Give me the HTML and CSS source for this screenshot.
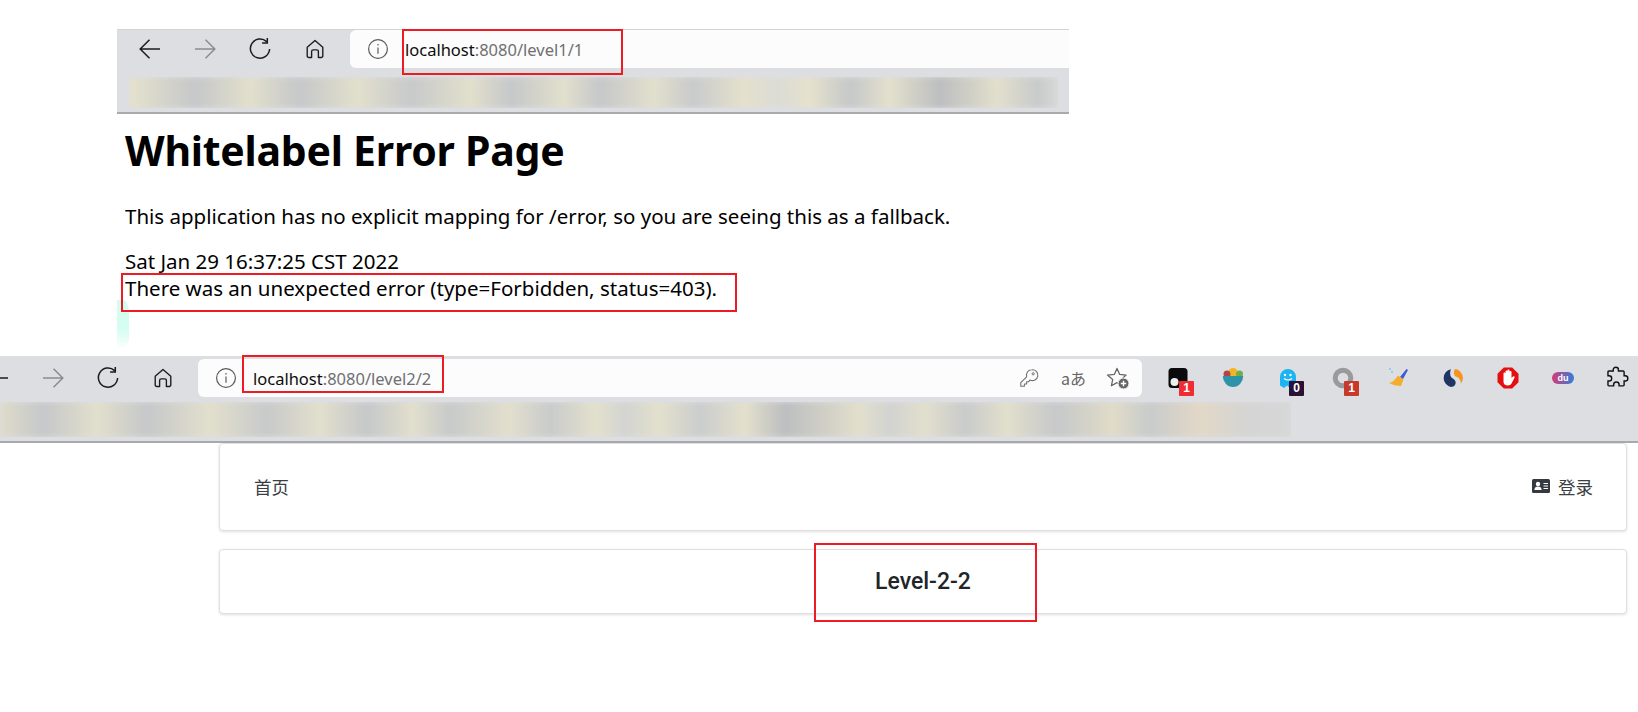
FILE: index.html
```html
<!DOCTYPE html>
<html lang="zh">
<head>
<meta charset="utf-8">
<title>Level-2-2</title>
<link rel="stylesheet" href="styles.css">
</head>
<body>
<svg class="defs" width="0" height="0" aria-hidden="true">
  <symbol id="i-back" viewBox="0 0 24 24"><path d="M22 12H2.5M11.5 2.8 2.2 12l9.3 9.2" fill="none" stroke="currentColor" stroke-width="1.5"/></symbol>
  <symbol id="i-forward" viewBox="0 0 24 24"><path d="M2 12h19.5M12.5 2.8l9.3 9.2-9.3 9.2" fill="none" stroke="currentColor" stroke-width="1.5"/></symbol>
  <symbol id="i-reload" viewBox="0 0 24 24"><path d="M18.6 4.6A9.6 9.6 0 1 0 21.6 12M19.3 1v5h-5.2" fill="none" stroke="currentColor" stroke-width="1.5"/></symbol>
  <symbol id="i-home" viewBox="0 0 24 24"><path d="M3.5 10.2 12 2.8l8.5 7.4v9.3a1.8 1.8 0 0 1-1.8 1.8h-3v-6.6a1.8 1.8 0 0 0-1.8-1.8h-3.8a1.8 1.8 0 0 0-1.8 1.8v6.6h-3a1.8 1.8 0 0 1-1.8-1.8z" fill="none" stroke="currentColor" stroke-width="1.5" stroke-linejoin="round"/></symbol>
  <symbol id="i-info" viewBox="0 0 22 22"><circle cx="11" cy="11" r="9.4" fill="none" stroke="currentColor" stroke-width="1.2"/><path d="M11 9.6v6.2M11 6v1.6" fill="none" stroke="currentColor" stroke-width="1.2"/></symbol>
</svg>

<section class="browser browser-top">
  <div class="toolbar">
    <span class="nav"><svg class="nav-icon"><use href="#i-back"/></svg></span>
    <span class="nav nav-muted"><svg class="nav-icon"><use href="#i-forward"/></svg></span>
    <span class="nav"><svg class="nav-icon"><use href="#i-reload"/></svg></span>
    <span class="nav"><svg class="nav-icon nav-home"><use href="#i-home"/></svg></span>
    <div class="address address-open">
      <svg class="info"><use href="#i-info"/></svg>
      <span class="url"><span class="host">localhost</span>:8080/level1/1</span>
    </div>
  </div>
  <div class="bookmarks"><div class="blur blur-top"></div></div>
</section>

<main class="error-page">
  <h1>Whitelabel Error Page</h1>
  <p class="fallback">This application has no explicit mapping for /error, so you are seeing this as a fallback.</p>
  <div class="detail">Sat Jan 29 16:37:25 CST 2022</div>
  <div class="detail">There was an unexpected error (type=Forbidden, status=403).</div>
</main>

<section class="browser browser-bottom">
  <div class="toolbar">
    <span class="nav nav-cut"><svg class="nav-icon"><use href="#i-back"/></svg></span>
    <span class="nav nav-muted"><svg class="nav-icon"><use href="#i-forward"/></svg></span>
    <span class="nav"><svg class="nav-icon"><use href="#i-reload"/></svg></span>
    <span class="nav"><svg class="nav-icon nav-home"><use href="#i-home"/></svg></span>
    <div class="address address-round">
      <svg class="info"><use href="#i-info"/></svg>
      <span class="url"><span class="host">localhost</span>:8080/level2/2</span>
      <span class="addr-tools">
        <svg class="addr-icon" viewBox="0 0 20 20"><path d="M12.8 1.8a5.4 5.4 0 0 0-5.2 7L1.8 14.6v3.6h3.6v-2.2h2.2v-2.2h1.8l1.7-1.8a5.4 5.4 0 1 0 1.7-10.2z" fill="none" stroke="#707070" stroke-width="1.1" stroke-linejoin="round"/><circle cx="14.2" cy="5.8" r="1.1" fill="none" stroke="#707070"/></svg>
        <span class="translate">aあ</span>
        <svg class="addr-icon addr-star" viewBox="0 0 24 24"><path d="M11 2.4l2.7 6 6.4.7-4.8 4.3 1.3 6.4-5.6-3.2-5.6 3.2 1.3-6.4L1.4 9.100l6.9-.7z" fill="none" stroke="#666" stroke-width="1.3" stroke-linejoin="round"/><circle cx="17.500" cy="17.500" r="5.500" fill="#666" stroke="#fcfcfc"/><path d="M17.500 14.800v5.400M14.800 17.500h5.400" stroke="#fff" stroke-width="1.400"/></svg>
      </span>
    </div>
    <div class="extensions">
      <span class="ext">
        <svg class="ext-icon" viewBox="0 0 22 22"><rect x="1.500" y="1" width="19" height="20" rx="3.500" fill="#0b0b0b"/><circle cx="7.500" cy="15" r="4" fill="#eee"/></svg>
        <b class="badge badge-red">1</b>
      </span>
      <span class="ext">
        <svg class="ext-icon" viewBox="0 0 22 22"><circle cx="11" cy="6" r="5" fill="#f3b525"/><circle cx="5" cy="7" r="3.500" fill="#b3434b"/><circle cx="17.500" cy="7" r="3.500" fill="#6db04a"/><path d="M.8 9h20.400a10.200 11 0 0 1-20.400 0z" fill="#2f93a8"/></svg>
      </span>
      <span class="ext">
        <svg class="ext-icon" viewBox="0 0 22 22"><path d="M3 10a8 8 0 0 1 16 0v11l-3-2.500-3 2.500-3-2.500-3 2.500-4-2.500z" fill="#1db4f2"/><circle cx="8" cy="8" r="1.200" fill="#fff"/><circle cx="13.500" cy="8" r="1.200" fill="#fff"/><path d="M7 11.500q4 3 8 0" fill="none" stroke="#fff" stroke-width="1.200"/></svg>
        <b class="badge badge-dark">0</b>
      </span>
      <span class="ext">
        <svg class="ext-icon" viewBox="0 0 22 22"><circle cx="11" cy="11" r="7.800" fill="none" stroke="#9a9a9a" stroke-width="5"/></svg>
        <b class="badge badge-brick">1</b>
      </span>
      <span class="ext">
        <svg class="ext-icon" viewBox="0 0 22 22"><path d="M13 10 19.500 2l1.500 1-5 9z" fill="#3c5bd6"/><path d="M11 8.500l5.500 4-2.500 6.500q-6 .5-12-3 5-1 9-7.500z" fill="#f5ad2c"/><path d="M3 1v2M5 4v2" stroke="#62c6e8" stroke-width="1.200"/></svg>
      </span>
      <span class="ext">
        <svg class="ext-icon" viewBox="0 0 22 22"><path d="M9 2.200a9 9 0 0 0 0 17.700c3.400-.2 5-2.400 4.600-4.900-.4-2.300-2.400-3-3.800-4.200-1.800-1.500-2.200-5.800-.8-8.600z" fill="#1f3564"/><path d="M13 2.100a9 9 0 0 1 5.800 14.600c.2-2.500-.8-4.700-3-6.100-1.700-1.100-3.500-1.600-3.800-3.600-.2-1.900.1-3.700 1-4.900z" fill="#f6941d"/></svg>
      </span>
      <span class="ext">
        <svg class="ext-icon" viewBox="0 0 22 22"><path d="M6.800.500h8.400l6.300 6.300v8.400l-6.300 6.300H6.800L.5 15.200V6.800z" fill="#e60f0f"/><path d="M6.500 9.500v-3a1 1 0 0 1 2 0v-2a1 1 0 0 1 2 0v-1a1 1 0 0 1 2 0v1.500a1 1 0 0 1 2 0V11l1.500-1.500a1 1 0 0 1 1.500 1.300l-3 5.700q-1 2-3.500 2-4.500 0-4.500-4z" fill="#fff"/></svg>
      </span>
      <span class="ext">
        <svg class="ext-du" viewBox="0 0 22 12"><defs><linearGradient id="du" x1="0" x2="1"><stop offset="0" stop-color="#d83a74"/><stop offset="1" stop-color="#2f7fdc"/></linearGradient></defs><rect width="22" height="12" rx="6" fill="url(#du)"/><text x="11" y="9.200" text-anchor="middle" class="du-text">du</text></svg>
      </span>
      <span class="ext">
        <svg class="ext-icon ext-puzzle" viewBox="2 0 22 22"><path d="M8.600 3.600a2.400 2.400 0 0 1 4.800 0v1h4.400a.8.8 0 0 1 .8.800v3.600h1a2.400 2.400 0 0 1 0 4.800h-1v3.600a.8.8 0 0 1-.8.800h-3.800v-1a2.500 2.500 0 0 0-5 0v1H4.600a.8.8 0 0 1-.8-.8v-3.600h1a2.400 2.400 0 0 0 0-4.800h-1V5.400a.8.8 0 0 1 .8-.8h4z" fill="none" stroke="#111" stroke-width="1.300"/></svg>
      </span>
    </div>
  </div>
  <div class="bookmarks"><div class="blur blur-bottom"></div></div>
</section>

<div class="cards">
  <nav class="card card-nav">
    <a class="nav-link">首页</a>
    <a class="nav-link login">
      <svg class="id-card" viewBox="0 0 18 14"><rect width="18" height="14" rx="1.500" fill="#343a40"/><circle cx="6" cy="5" r="2.200" fill="#fff"/><path d="M2.400 11c0-2.500 1.500-3.500 3.600-3.500s3.600 1 3.600 3.500z" fill="#fff"/><path d="M11.500 4.500h4.500M11.500 7h4.500M11.500 9.500h4.500" stroke="#fff" stroke-width="1"/></svg>
      登录
    </a>
  </nav>
  <div class="card card-title">Level-2-2</div>
</div>

<div class="mint"></div>
<div class="mark mark-url-one"></div>
<div class="mark mark-error"></div>
<div class="mark mark-url-two"></div>
<div class="mark mark-title"></div>
</body>
</html>
```
FILE: styles.css
```css
html, body {
  margin: 0;
  padding: 0;
  background: #fff;
}

body {
  position: relative;
  width: 1638px;
  height: 712px;
  overflow: hidden;
  font-family: "Noto Sans", "Noto Sans CJK SC", sans-serif;
  color: #000;
}

.defs {
  display: block;
  height: 0;
}

.browser {
  background: #dcdee2;
  overflow: hidden;
}

.browser-top {
  width: 952px;
  height: 85px;
  margin: 29px 0 0 117px;
  border-top: 1px solid #d2d3d5;
  border-bottom: 2px solid #a9aaad;
  box-sizing: border-box;
}

.browser-bottom {
  width: 1638px;
  height: 87px;
  border-bottom: 2px solid #a9aaad;
  box-sizing: border-box;
  padding-top: 3px;
}

.toolbar {
  display: flex;
  align-items: stretch;
  height: 38px;
}

.browser-top .toolbar {
  padding-left: 5px;
}

.nav {
  flex: 0 0 55px;
  display: flex;
  align-items: center;
  justify-content: center;
  color: #1c1c1c;
}

.nav-cut {
  margin-left: -30px;
}

.nav-muted {
  color: #8b8c8e;
}

.nav-icon {
  width: 24px;
  height: 24px;
}

.nav-home {
  width: 22px;
  height: 22px;
}

.address {
  display: flex;
  align-items: center;
  background: #fcfcfc;
  margin-left: 8px;
  padding-left: 17px;
  box-sizing: border-box;
}

.address-open {
  flex: 1;
  border-radius: 6px 0 0 6px;
}

.address-round {
  flex: 0 0 944px;
  border-radius: 6px;
}

.info {
  flex: 0 0 22px;
  width: 22px;
  height: 22px;
  color: #5a5a5a;
}

.url {
  margin-left: 16px;
  font-size: 16.5px;
  color: #6f7072;
  white-space: nowrap;
}

.host {
  color: #0d0d0d;
}

.addr-tools {
  margin-left: auto;
  display: flex;
  align-items: center;
  padding-right: 12px;
}

.addr-icon {
  width: 20px;
  height: 20px;
}

.addr-star {
  width: 24px;
  height: 24px;
  margin-left: 10px;
}

.translate {
  width: 45px;
  margin-left: 12px;
  text-align: center;
  font-family: "Noto Sans CJK JP", sans-serif;
  font-size: 16px;
  color: #666;
}

.extensions {
  display: flex;
  flex: 0 0 auto;
  margin-left: 8px;
}

.ext {
  position: relative;
  flex: 0 0 55px;
  display: flex;
  align-items: center;
  justify-content: center;
}

.ext-icon {
  width: 22px;
  height: 22px;
}

.ext-puzzle {
  width: 24px;
  height: 24px;
}

.ext-du {
  width: 22px;
  height: 12px;
}

.du-text {
  font-family: "Liberation Sans", sans-serif;
  font-size: 9px;
  font-weight: 700;
  fill: #fff;
}

.badge {
  position: absolute;
  left: 29px;
  top: 22px;
  width: 15px;
  height: 15px;
  border-radius: 1px;
  font-family: "Liberation Sans", sans-serif;
  font-size: 12px;
  line-height: 15px;
  font-weight: 700;
  text-align: center;
  color: #fff;
}

.badge-red {
  background: #ee2c32;
}

.badge-dark {
  background: #2a0f37;
}

.badge-brick {
  background: #c63a2c;
}

.bookmarks {
  overflow: hidden;
}

.browser-top .bookmarks {
  margin: 9px 11px 0 12px;
  height: 31px;
}

.browser-bottom .bookmarks {
  margin-top: 5px;
  width: 1291px;
  height: 35px;
}

.blur {
  height: 100%;
  filter: blur(2px);
}

.blur-top {
  background: linear-gradient(90deg,
    #e2dfcc 7px, #c6c8ca 67px, #e2dfcc 121px, #c6c8ca 171px, #e2dfcc 228px, #c8cacb 282px,
    #e2dfcc 342px, #c6c8ca 382px, #e2dfcc 435px, #c6c8ca 471px, #e2dfcc 525px, #c9cbcc 564px,
    #e4e0cc 614px, #dcdcd6 650px, #e5e1cc 681px, #c6c8ca 721px, #e3e0cc 761px, #bdbec0 811px,
    #e2dfcc 868px, #c9cbcc 908px, #d6d7d5 929px);
}

.blur-bottom {
  background: linear-gradient(90deg,
    #dfdccb 0, #c6c8ca 43px, #e2dfcc 97px, #c6c8ca 147px, #e2dfcc 210px, #c8cacb 267px,
    #e2dfcc 320px, #c6c8ca 367px, #e2dfcc 413px, #c8cacb 450px, #e2dfcc 510px, #c9cbcc 550px,
    #e3e0cc 595px, #d3d4d2 625px, #e3e0cc 660px, #cbcdce 700px, #e3e0cc 745px, #bdbec0 785px,
    #e2dfcc 860px, #d2d3d1 890px, #e2dfcc 925px, #c9cbcc 965px, #e2dfcc 1007px, #c6c8ca 1057px,
    #e0dcc8 1113px, #c9cbcc 1150px, #e2d8c6 1200px, #d4d5d4 1247px, #d6d7d6 1291px);
}

.error-page {
  height: 242px;
  padding-left: 125px;
  box-sizing: border-box;
}

h1 {
  margin: 0;
  padding-top: 8px;
  font-size: 41px;
  line-height: 57px;
  font-weight: 700;
  letter-spacing: -0.25px;
}

.fallback {
  margin: 24px 0 18px;
  font-size: 20.5px;
  line-height: 27px;
}

.detail {
  font-size: 20.5px;
  line-height: 27px;
}

.cards {
  display: flex;
  flex-direction: column;
  gap: 18px;
  margin: 0 11px 0 219px;
}

.card {
  background: #fff;
  border: 1px solid #dfe0e1;
  border-radius: 4px;
  box-shadow: 0 1px 3px rgba(0, 0, 0, 0.12);
  box-sizing: border-box;
}

.card-nav {
  height: 88px;
  padding: 0 33px 2px 34px;
  display: flex;
  align-items: center;
  justify-content: space-between;
}

.nav-link {
  display: flex;
  align-items: center;
  gap: 8px;
  font-family: "Noto Sans CJK SC", sans-serif;
  font-size: 17.5px;
  font-weight: 400;
  color: #3a3f44;
}

.id-card {
  width: 18px;
  height: 14px;
}

.card-title {
  height: 65px;
  display: flex;
  align-items: center;
  justify-content: center;
  font-family: Roboto, sans-serif;
  font-size: 23px;
  font-weight: 500;
  color: #212529;
}

.mint {
  position: absolute;
  left: 117px;
  top: 300px;
  width: 12px;
  height: 50px;
  border-radius: 0 12px 24px 0 / 0 24px 24px 0;
  background: linear-gradient(180deg, #d2fdf0 0, #d6fdf2 60%, #ffffff 100%);
}

.mark {
  position: absolute;
  box-sizing: border-box;
  border: 2px solid #ed1c24;
}

.mark-url-one {
  left: 402px;
  top: 29px;
  width: 221px;
  height: 46px;
}

.mark-error {
  left: 121px;
  top: 273px;
  width: 616px;
  height: 39px;
}

.mark-url-two {
  left: 242px;
  top: 355px;
  width: 202px;
  height: 38px;
}

.mark-title {
  left: 814px;
  top: 543px;
  width: 223px;
  height: 79px;
}
```
